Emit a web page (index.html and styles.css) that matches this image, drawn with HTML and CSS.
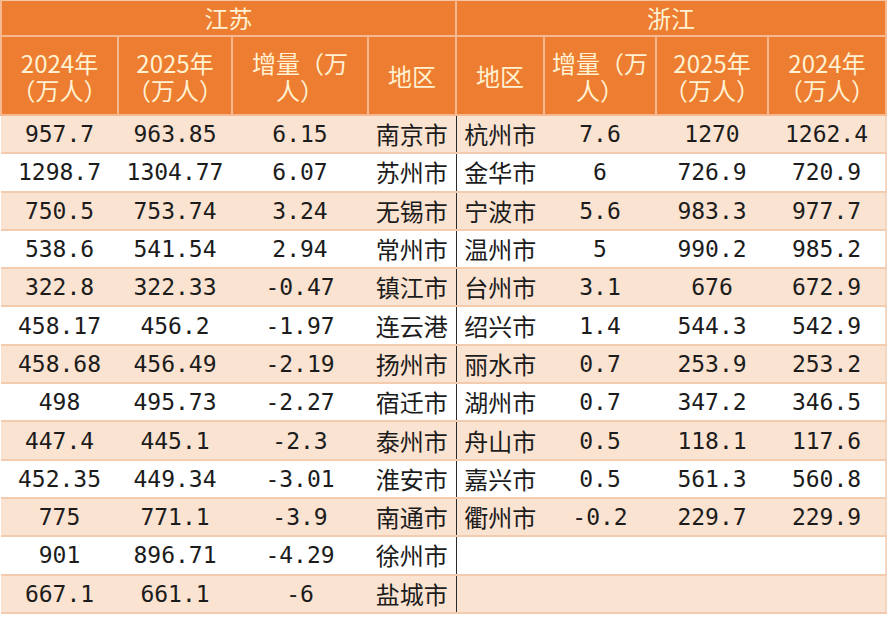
FILE: index.html
```html
<!DOCTYPE html>
<html lang="zh-CN">
<head>
<meta charset="utf-8">
<title>江苏 浙江 人口</title>
<link rel="stylesheet" href="styles.css">
</head>
<body>
<table class="pop">
  <colgroup>
    <col class="c1"><col class="c2"><col class="c3"><col class="c4">
    <col class="c5"><col class="c6"><col class="c7"><col class="c8">
  </colgroup>
  <thead>
    <tr class="h1">
      <th colspan="4" class="split">江苏</th>
      <th colspan="4">浙江</th>
    </tr>
    <tr class="h2">
      <th><span class="ln">2024年</span><span class="ln">（万人）</span></th>
      <th><span class="ln">2025年</span><span class="ln">（万人）</span></th>
      <th><span class="ln">增量（万</span><span class="ln">人）</span></th>
      <th class="split">地区</th>
      <th>地区</th>
      <th><span class="ln">增量（万</span><span class="ln">人）</span></th>
      <th><span class="ln">2025年</span><span class="ln">（万人）</span></th>
      <th><span class="ln">2024年</span><span class="ln">（万人）</span></th>
    </tr>
  </thead>
  <tbody>
    <tr><td class="n">957.7</td><td class="n">963.85</td><td class="n">6.15</td><td class="city split">南京市</td><td class="city">杭州市</td><td class="n">7.6</td><td class="n">1270</td><td class="n">1262.4</td></tr>
    <tr><td class="n">1298.7</td><td class="n">1304.77</td><td class="n">6.07</td><td class="city split">苏州市</td><td class="city">金华市</td><td class="n">6</td><td class="n">726.9</td><td class="n">720.9</td></tr>
    <tr><td class="n">750.5</td><td class="n">753.74</td><td class="n">3.24</td><td class="city split">无锡市</td><td class="city">宁波市</td><td class="n">5.6</td><td class="n">983.3</td><td class="n">977.7</td></tr>
    <tr><td class="n">538.6</td><td class="n">541.54</td><td class="n">2.94</td><td class="city split">常州市</td><td class="city">温州市</td><td class="n">5</td><td class="n">990.2</td><td class="n">985.2</td></tr>
    <tr><td class="n">322.8</td><td class="n">322.33</td><td class="n">-0.47</td><td class="city split">镇江市</td><td class="city">台州市</td><td class="n">3.1</td><td class="n">676</td><td class="n">672.9</td></tr>
    <tr><td class="n">458.17</td><td class="n">456.2</td><td class="n">-1.97</td><td class="city split">连云港</td><td class="city">绍兴市</td><td class="n">1.4</td><td class="n">544.3</td><td class="n">542.9</td></tr>
    <tr><td class="n">458.68</td><td class="n">456.49</td><td class="n">-2.19</td><td class="city split">扬州市</td><td class="city">丽水市</td><td class="n">0.7</td><td class="n">253.9</td><td class="n">253.2</td></tr>
    <tr><td class="n">498</td><td class="n">495.73</td><td class="n">-2.27</td><td class="city split">宿迁市</td><td class="city">湖州市</td><td class="n">0.7</td><td class="n">347.2</td><td class="n">346.5</td></tr>
    <tr><td class="n">447.4</td><td class="n">445.1</td><td class="n">-2.3</td><td class="city split">泰州市</td><td class="city">舟山市</td><td class="n">0.5</td><td class="n">118.1</td><td class="n">117.6</td></tr>
    <tr><td class="n">452.35</td><td class="n">449.34</td><td class="n">-3.01</td><td class="city split">淮安市</td><td class="city">嘉兴市</td><td class="n">0.5</td><td class="n">561.3</td><td class="n">560.8</td></tr>
    <tr><td class="n">775</td><td class="n">771.1</td><td class="n">-3.9</td><td class="city split">南通市</td><td class="city">衢州市</td><td class="n">-0.2</td><td class="n">229.7</td><td class="n">229.9</td></tr>
    <tr><td class="n">901</td><td class="n">896.71</td><td class="n">-4.29</td><td class="city split">徐州市</td><td></td><td></td><td></td><td></td></tr>
    <tr><td class="n">667.1</td><td class="n">661.1</td><td class="n">-6</td><td class="city split">盐城市</td><td></td><td></td><td></td><td></td></tr>
  </tbody>
</table>
</body>
</html>
```
FILE: styles.css
```css
html, body {
  margin: 0;
  padding: 0;
  background: #ffffff;
}

.pop {
  width: 885px;
  table-layout: fixed;
  border-collapse: collapse;
  font-family: "Noto Sans CJK SC", "Noto Sans", sans-serif;
  color: #1c1c1c;
}

.c1 { width: 117px; }
.c2 { width: 114px; }
.c3 { width: 136px; }
.c4 { width: 88px; }
.c5 { width: 88px; }
.c6 { width: 112px; }
.c7 { width: 112px; }
.c8 { width: 118px; }

.pop th {
  background: #ed7d31;
  color: #fff1d2;
  font-weight: normal;
  font-size: 24px;
  line-height: 27px;
  padding: 0;
  text-align: center;
  border: 2px solid #f6b98f;
}

.pop th .ln {
  display: block;
  height: 27px;
  line-height: 27px;
}

.pop .h1 th {
  height: 34px;
  line-height: 30px;
  border-top: 1px solid #f6c7a6;
}

.pop .h2 th {
  height: 77px;
}

.pop td {
  height: 36.3px;
  padding: 0;
  text-align: center;
  font-size: 24px;
  line-height: 30px;
  border-bottom: 2px solid #f3cbae;
  white-space: nowrap;
}

.pop tbody tr:nth-child(odd) td {
  background: #fbe3d1;
}

.pop tbody tr:nth-child(even) td {
  background: #ffffff;
}

.pop td.n {
  font-family: "DejaVu Sans Mono", "Liberation Mono", monospace;
  font-size: 23px;
}

.pop td:last-child {
  border-right: 2px solid #f3d6c2;
}

.pop .split {
  border-right: 1px solid #2a2a2a;
}
```
